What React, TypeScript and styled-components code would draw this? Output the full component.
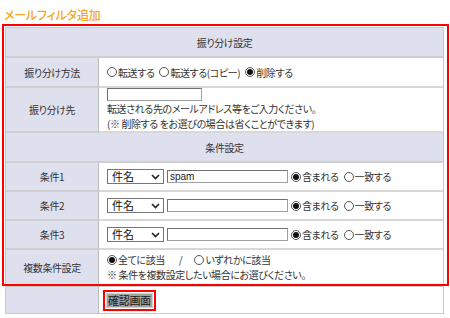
import * as React from "react";
import styled, { createGlobalStyle } from "styled-components";

const GlobalStyle = createGlobalStyle`
  body {
    margin: 0;
    background: #fff;
    font-family: "Noto Sans CJK JP", "Noto Sans", sans-serif;
    font-feature-settings: "palt";
    color: #333;
  }
`;

const Page = styled.div`
  width: 450px;
  height: 318px;
  overflow: hidden;
`;

const Title = styled.h2`
  margin: 0;
  padding: 6px 0 0 4px;
  height: 18px;
  font-size: 12px;
  line-height: 18px;
  font-weight: 500;
  color: #f5a623;
  letter-spacing: -0.2px;
`;

const RedBox = styled.div`
  margin: 0 0 0 2px;
  width: 441px;
  border: 2px solid #ff0000;
  padding: 1px 1px 0 1px;
`;

const Grid = styled.div<{ $last?: boolean }>`
  display: grid;
  grid-template-columns: 93px 1fr;
  border: 1px solid #c8c8c8;
  border-bottom: ${(p) => (p.$last ? "1px solid #c8c8c8" : "none")};
  width: 437px;
  font-size: 10px;
  letter-spacing: -0.4px;
`;

const Header = styled.div`
  grid-column: 1 / 3;
  height: 28px;
  background: #dfe0ee;
  border-bottom: 2px solid #cfcfcf;
  display: flex;
  align-items: center;
  justify-content: center;
`;

const Label = styled.div<{ $h: number; $last?: boolean }>`
  height: ${(p) => p.$h}px;
  background: #dfe0ee;
  border-right: 1px solid #bcbcbc;
  border-bottom: ${(p) => (p.$last ? "none" : "2px solid #cfcfcf")};
  display: flex;
  align-items: center;
  justify-content: center;
`;

const Value = styled.div<{ $h: number; $last?: boolean }>`
  height: ${(p) => p.$h}px;
  border-bottom: ${(p) => (p.$last ? "none" : "2px solid #d8d8d8")};
  padding-left: 8px;
  display: flex;
  flex-direction: column;
  justify-content: center;
  line-height: 15px;
`;

const Line = styled.div`
  display: flex;
  align-items: center;
  gap: 3px;
  white-space: nowrap;
`;

const RadioItem = styled.span`
  display: inline-flex;
  align-items: center;
  margin-right: 2px;
`;

const Dot = styled.span<{ $on?: boolean }>`
  width: 10px;
  height: 10px;
  box-sizing: border-box;
  border: 1px solid #555;
  border-radius: 50%;
  margin-right: 1px;
  display: inline-flex;
  align-items: center;
  justify-content: center;
  &::after {
    content: "";
    width: 6px;
    height: 6px;
    border-radius: 50%;
    background: ${(p) => (p.$on ? "#111" : "transparent")};
  }
`;

const TextBox = styled.div<{ $w: number }>`
  width: ${(p) => p.$w}px;
  height: 13px;
  box-sizing: border-box;
  border: 1px solid #a0a0a0;
  border-top-color: #707070;
  border-left-color: #707070;
  background: #fff;
  font-family: "Liberation Sans", sans-serif;
  font-size: 10px;
  line-height: 11px;
  letter-spacing: 0;
  padding-left: 2px;
  color: #222;
`;

const Select = styled.div`
  width: 57px;
  height: 15px;
  box-sizing: border-box;
  border: 1px solid #767676;
  display: flex;
  align-items: center;
  justify-content: space-between;
  padding: 0 3px 0 4px;
  font-size: 11px;
  letter-spacing: 0;
  color: #111;
`;

const Slash = styled.span`
  margin: 0 9px;
`;

const ButtonWrap = styled.div`
  display: inline-flex;
  border: 2px solid #ff0000;
  padding: 1px;
  margin-left: -4px;
  align-self: flex-start;
`;

const Button = styled.div`
  background: #a2a2a2;
  border: 1px solid #d0d0d0;
  font-size: 11px;
  line-height: 13px;
  letter-spacing: -0.3px;
  padding: 0 1px;
  color: #1a1a1a;
`;

const Bottom = styled.div`
  margin-left: 5px;
`;

const Radio = ({ on, children }: { on?: boolean; children: React.ReactNode }) => (
  <RadioItem>
    <Dot $on={on} />
    {children}
  </RadioItem>
);

const Chevron = () => (
  <svg width="9" height="6" viewBox="0 0 9 6">
    <path d="M1 1 L4.5 4.5 L8 1" fill="none" stroke="#222" strokeWidth="1.6" />
  </svg>
);

const Condition = ({ value }: { value?: string }) => (
  <Line>
    <Select>
      <span>件名</span>
      <Chevron />
    </Select>
    <TextBox $w={121}>{value}</TextBox>
    <Radio on>含まれる</Radio>
    <Radio>一致する</Radio>
  </Line>
);

export default function App() {
  return (
    <Page>
      <GlobalStyle />
      <Title>メールフィルタ追加</Title>
      <RedBox>
        <Grid>
          <Header>振り分け設定</Header>
          <Label $h={28}>振り分け方法</Label>
          <Value $h={28}>
            <Line>
              <Radio>転送する</Radio>
              <Radio>転送する(コピー)</Radio>
              <Radio on>削除する</Radio>
            </Line>
          </Value>
          <Label $h={43}>振り分け先</Label>
          <Value $h={43}>
            <TextBox $w={95} />
            <div>転送される先のメールアドレス等をご入力ください。</div>
            <div>(※ 削除する をお選びの場合は省くことができます)</div>
          </Value>
          <Header>条件設定</Header>
          <Label $h={27}>条件1</Label>
          <Value $h={27}>
            <Condition value="spam" />
          </Value>
          <Label $h={27}>条件2</Label>
          <Value $h={27}>
            <Condition />
          </Value>
          <Label $h={27}>条件3</Label>
          <Value $h={27}>
            <Condition />
          </Value>
          <Label $h={34} $last>複数条件設定</Label>
          <Value $h={34} $last>
            <Line>
              <Radio on>全てに該当</Radio>
              <Slash>/</Slash>
              <Radio>いずれかに該当</Radio>
            </Line>
            <div>※ 条件を複数設定したい場合にお選びください。</div>
          </Value>
        </Grid>
      </RedBox>
      <Bottom>
        <Grid $last>
          <Label $h={26} $last />
          <Value $h={26} $last>
            <ButtonWrap>
              <Button>確認画面</Button>
            </ButtonWrap>
          </Value>
        </Grid>
      </Bottom>
    </Page>
  );
}
